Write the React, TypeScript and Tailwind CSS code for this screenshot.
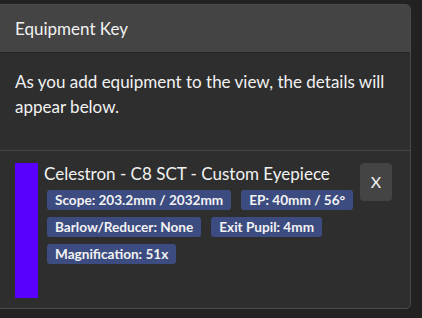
import React from "react";

const badges = [
	["Scope: 203.2mm / 2032mm", "EP: 40mm / 56°"],
	["Barlow/Reducer: None", "Exit Pupil: 4mm"],
	["Magnification: 51x"],
];

export default function App() {
	return (
		<div
			className="h-[318px] w-[422px] overflow-hidden bg-[#222222] pt-1"
			style={{ fontFamily: "Lato, 'Open Sans', sans-serif" }}
		>
			<div className="ml-[-6px] h-[305px] w-[417px] overflow-hidden rounded-[5px] border border-[#4a4a4a] bg-[#2e2e2e]">
				<div className="flex h-[48px] items-center border-b border-[#262626] bg-[#444444] pl-[20px] text-[17px] text-[#f2f2f2]">
					Equipment Key
				</div>
				<div className="border-b border-[#464646] px-[20px] pt-[16px] pb-[31px] text-[17px] leading-[25px] text-[#f2f2f2]">
					As you add equipment to the view, the details will appear below.
				</div>
				<div className="flex pt-[12px] pl-[20px] pr-[18px]">
					<div className="h-[135px] w-[23px] shrink-0 bg-[#5a00ff]" />
					<div className="ml-[6px] flex-1">
						<div className="text-[17px] leading-[22px] text-[#f2f2f2]">
							Celestron - C8 SCT - Custom Eyepiece
						</div>
						<div className="mt-[5px] flex flex-col gap-[7px] pl-[3px]">
							{badges.map((row, i) => (
								<div key={i} className="flex gap-[10px]">
									{row.map((b) => (
										<span
											key={b}
											className="h-[20px] rounded-[3px] bg-[#3c4c80] px-[8px] text-[13.6px] font-bold leading-[20px] text-[#f2f2f2]"
										>
											{b}
										</span>
									))}
								</div>
							))}
						</div>
					</div>
					<button className="flex h-[38px] w-[32px] shrink-0 items-center justify-center rounded-[4px] bg-[#444444] text-[16px] text-[#f2f2f2]">
						X
					</button>
				</div>
			</div>
		</div>
	);
}
